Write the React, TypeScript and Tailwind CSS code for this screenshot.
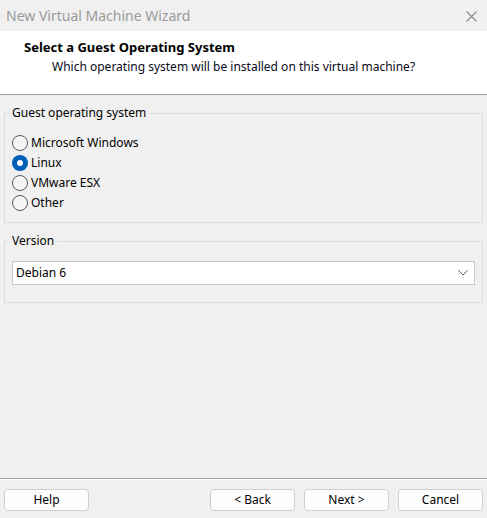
import { useState } from "react";

const font = { fontFamily: '"Noto Sans", "Segoe UI", sans-serif' };

const osOptions = ["Microsoft Windows", "Linux", "VMware ESX", "Other"];

function Radio({ label, checked, onSelect }: { label: string; checked: boolean; onSelect: () => void }) {
  return (
    <div className="flex h-[20px] items-center cursor-default" onClick={onSelect}>
      {checked ? (
        <span className="flex h-[16px] w-[16px] items-center justify-center rounded-full bg-[#005fb8]">
          <span className="h-[6px] w-[6px] rounded-full bg-white" />
        </span>
      ) : (
        <span className="h-[16px] w-[16px] rounded-full border border-[#5a5a5a] bg-[#f5f5f5]" />
      )}
      <span className="ml-[3px] text-[12px] text-black">{label}</span>
    </div>
  );
}

function Button({ children }: { children: React.ReactNode }) {
  return (
    <button className="h-[22px] w-[85px] rounded-[4px] border border-[#d0d0d0] bg-[#fdfdfd] text-[12px] text-black">
      {children}
    </button>
  );
}

export default function App() {
  const [os, setOs] = useState("Linux");

  return (
    <div className="flex h-[518px] w-[487px] flex-col bg-[#f0f0f0] select-none" style={font}>
      {/* title bar */}
      <div className="flex h-[31px] items-center justify-between pl-[6px] pr-[10px]">
        <span className="text-[14px] text-[#9a9a9a]">New Virtual Machine Wizard</span>
        <svg width="11" height="11" viewBox="0 0 11 11" className="mt-[1px]">
          <path d="M0.5 0.5L10.5 10.5M10.5 0.5L0.5 10.5" stroke="#8a8a8a" strokeWidth="1.1" />
        </svg>
      </div>

      {/* header */}
      <div className="h-[64px] border-b border-[#a0a0a0] bg-white pt-[8px]">
        <div className="pl-[24px] text-[13px] font-bold leading-[17px] text-black">Select a Guest Operating System</div>
        <div className="mt-[3px] pl-[52px] text-[12px] leading-[16px] text-[#0a0a1a]">
          Which operating system will be installed on this virtual machine?
        </div>
      </div>

      {/* body */}
      <div className="flex-1 px-[4px] pt-[10px]">
        <fieldset className="border border-[#dcdcdc] px-[7px] pt-[12px] pb-[9px]">
          <legend className="-ml-[3px] px-[3px] text-[12px] leading-[16px] text-black">Guest operating system</legend>
          {osOptions.map((o) => (
            <Radio key={o} label={o} checked={os === o} onSelect={() => setOs(o)} />
          ))}
        </fieldset>

        <fieldset className="mt-[10px] border border-[#dcdcdc] px-[7px] pt-[12px] pb-[17px]">
          <legend className="-ml-[3px] px-[3px] text-[12px] leading-[16px] text-black">Version</legend>
          <div className="flex h-[24px] items-center justify-between border border-[#c8c8c8] bg-white pl-[3px] pr-[6px]">
            <span className="text-[12px] text-black">Debian 6</span>
            <svg width="10" height="6" viewBox="0 0 10 6">
              <path d="M0.5 0.5L5 5L9.5 0.5" fill="none" stroke="#555" strokeWidth="1" />
            </svg>
          </div>
        </fieldset>
      </div>

      {/* footer */}
      <div className="h-px bg-[#a0a0a0]" />
      <div className="h-px bg-white" />
      <div className="flex items-center px-[4px] pt-[9px] pb-[7px]">
        <Button>Help</Button>
        <div className="flex-1" />
        <div className="flex gap-[9px]">
          <Button>&lt; Back</Button>
          <Button>Next &gt;</Button>
          <Button>Cancel</Button>
        </div>
      </div>
    </div>
  );
}
